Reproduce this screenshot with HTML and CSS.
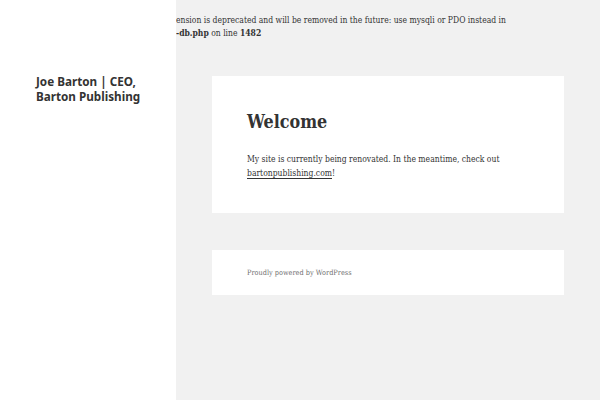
FILE: index.html
```html
<!DOCTYPE html>
<html>
<head>
<meta charset="utf-8">
<link rel="stylesheet" href="styles.css">
</head>
<body>
<div class="warning">
  <div class="wline"><span class="pre"><b>Deprecated</b>: mysql_connect(): The mysql ext</span>ension is deprecated and will be removed in the future: use mysqli or PDO instead in</div>
  <div class="wline"><span class="pre"><b>/home/barton/public_html/wp-includes/wp</b></span><b>-db.php</b> on line <b>1482</b></div>
</div>
<div class="sidebar">
  <h1 class="site-title">Joe Barton | CEO, Barton Publishing</h1>
</div>
<main class="main">
  <article class="card entry">
    <h2 class="entry-title">Welcome</h2>
    <p class="entry-text">My site is currently being renovated. In the meantime, check out <a href="#">bartonpublishing.com</a>!</p>
  </article>
  <footer class="card footer">
    <span class="credit">Proudly powered by WordPress</span>
  </footer>
</main>
</body>
</html>
```

FILE: styles.css
```css
html, body {
  margin: 0;
  padding: 0;
}
body {
  background: #f1f1f1;
  color: #333;
  font-family: "DejaVu Serif Condensed", "DejaVu Serif", "Liberation Serif", serif;
  font-stretch: condensed;
  width: 600px;
  height: 400px;
  overflow: hidden;
  position: relative;
}
.warning {
  padding-top: 14px;
  font-size: 8.5px;
  line-height: 13px;
  color: #333;
}
.wline {
  white-space: nowrap;
}
.pre {
  display: inline-block;
  width: 176px;
  text-align: right;
  overflow: hidden;
  vertical-align: top;
  direction: rtl;
}
.sidebar {
  position: absolute;
  left: 0;
  top: 0;
  width: 176px;
  height: 400px;
  background: #fff;
}
.site-title {
  margin: 0;
  padding: 74px 0 0 36px;
  font-family: "Noto Sans", "Open Sans", sans-serif;
  font-stretch: normal;
  font-size: 11.7px;
  font-weight: 700;
  line-height: 15px;
  color: #333;
}
.main {
  margin-left: 212px;
  width: 352px;
  padding-top: 36px;
}
.card {
  background: #fff;
  box-sizing: border-box;
}
.entry {
  height: 137px;
  padding: 34px 35px 0 35px;
}
.entry-title {
  margin: 0;
  font-size: 17.8px;
  font-weight: 700;
  line-height: 24px;
  color: #333;
}
.entry-text {
  margin: 19px 0 0 0;
  font-size: 8.5px;
  line-height: 13.5px;
  color: #333;
}
.entry-text a {
  color: #333;
  text-decoration: none;
  border-bottom: 1px solid #333;
}
.footer {
  margin-top: 37px;
  height: 45px;
  padding: 0 35px;
  display: flex;
  align-items: center;
}
.credit {
  font-size: 7.3px;
  color: #707070;
}
```
